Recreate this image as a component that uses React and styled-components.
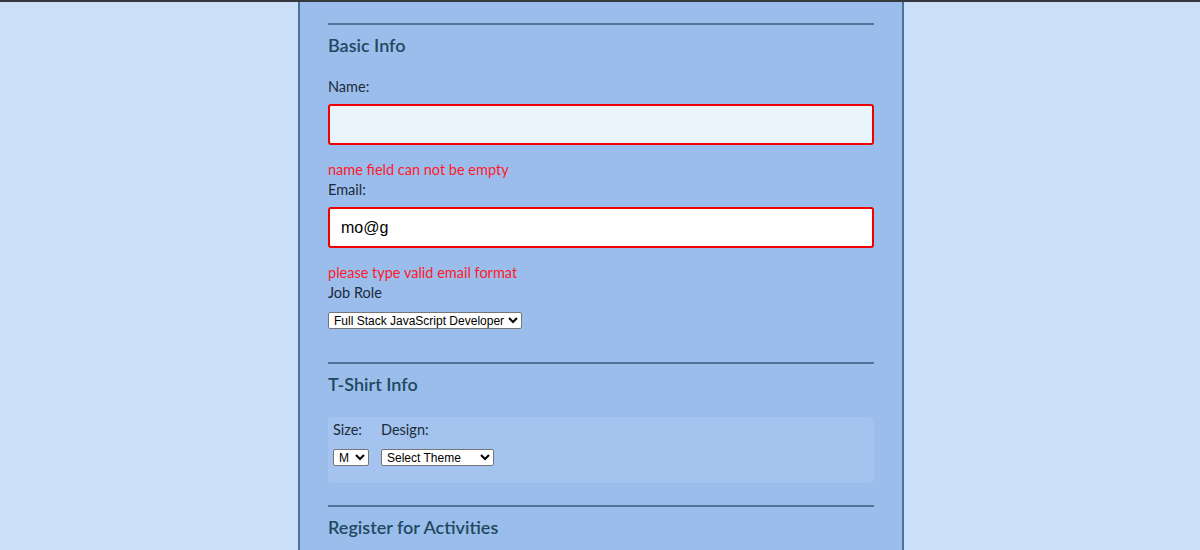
import React, { useState } from 'react';
import styled, { createGlobalStyle } from 'styled-components';

const GlobalStyle = createGlobalStyle`
  html, body {
    margin: 0;
    padding: 0;
    background: #cbdff9;
  }
  body {
    border-top: 2px solid #35393d;
    font-family: "Lato", "Open Sans", sans-serif;
  }
`;

const jobRoles = ['Full Stack JavaScript Developer', 'Front End Developer', 'Back End Developer', 'Designer', 'Other'];
const sizes = ['S', 'M', 'L', 'XL'];
const themes = ['Select Theme', 'Theme - JS Puns', 'Theme - I ♥ JS'];

const App = () => {
  const [name, setName] = useState('');
  const [email, setEmail] = useState('mo@g');

  return (
    <>
      <GlobalStyle />
      <Page>
        <Container>
          <Section>
            <Heading>Basic Info</Heading>
            <Label htmlFor="name">Name:</Label>
            <TextInput id="name" $invalid $tint value={name} onChange={e => setName(e.target.value)} />
            <ErrorText>name field can not be empty</ErrorText>
            <Label htmlFor="mail">Email:</Label>
            <TextInput id="mail" $invalid value={email} onChange={e => setEmail(e.target.value)} autoFocus />
            <ErrorText>please type valid email format</ErrorText>
            <Label htmlFor="title">Job Role</Label>
            <SelectBox id="title" defaultValue={jobRoles[0]}>
              {jobRoles.map(r => <option key={r}>{r}</option>)}
            </SelectBox>
          </Section>

          <Section>
            <Heading>T-Shirt Info</Heading>
            <ShirtBox>
              <ShirtColumn>
                <SmallLabel>Size:</SmallLabel>
                <SelectBox $width={36} defaultValue="M">
                  {sizes.map(s => <option key={s}>{s}</option>)}
                </SelectBox>
              </ShirtColumn>
              <ShirtColumn>
                <SmallLabel>Design:</SmallLabel>
                <SelectBox $width={113} defaultValue={themes[0]}>
                  {themes.map(t => <option key={t}>{t}</option>)}
                </SelectBox>
              </ShirtColumn>
            </ShirtBox>
          </Section>

          <Section>
            <Heading>Register for Activities</Heading>
          </Section>
        </Container>
      </Page>
    </>
  );
};

const Page = styled.div`
  display: flex;
  justify-content: center;
  padding-left: 2px;
  height: 548px;
  overflow: hidden;
`;

const Container = styled.div`
  width: 546px;
  padding: 21px 28px 0 28px;
  background: #9bbdec;
  border-left: 2px solid #4a7398;
  border-right: 2px solid #4a7398;
`;

const Section = styled.div`
  display: flex;
  flex-direction: column;
  align-items: flex-start;
  border-top: 2px solid #4b7696;
  padding-bottom: 33px;
`;

const Heading = styled.h2`
  margin: 8px 0 20px 0;
  font-size: 18px;
  line-height: 24px;
  font-weight: 600;
  color: #1e4a5f;
`;

const Label = styled.label`
  font-size: 14.5px;
  line-height: 20px;
  color: #1c2b3a;
`;

const SmallLabel = styled(Label)`
  margin-bottom: 9px;
`;

const TextInput = styled.input`
  box-sizing: border-box;
  width: 100%;
  height: 41px;
  margin-top: 7px;
  padding: 0 11px;
  border: 2px solid ${p => (p.$invalid ? '#f00000' : '#4b7696')};
  border-radius: 3px;
  background: ${p => (p.$tint ? '#e9f5fb' : '#ffffff')};
  font-family: "Liberation Sans", Arial, sans-serif;
  font-size: 16px;
  color: #000;
  outline: none;
`;

const ErrorText = styled.p`
  margin: 15px 0 0 0;
  font-size: 14.5px;
  line-height: 20px;
  color: #ff1a2a;
`;

const SelectBox = styled.select`
  box-sizing: border-box;
  width: ${p => (p.$width ? `${p.$width}px` : 'auto')};
  height: 17px;
  margin-top: 9px;
  padding: 0 0 0 1px;
  font-family: "Liberation Sans", Arial, sans-serif;
  font-size: 12px;
  color: #000;
  background: #fff;
  border: 1px solid #767676;
  border-radius: 2px;
`;

const ShirtBox = styled.div`
  align-self: stretch;
  display: flex;
  gap: 12px;
  margin-top: 1px;
  margin-bottom: -11px;
  padding: 3px 5px 17px 5px;
  background: #a4c4ef;
  border-radius: 4px;

  ${SelectBox} {
    margin-top: 0;
  }
`;

const ShirtColumn = styled.div`
  display: flex;
  flex-direction: column;
  align-items: flex-start;
`;

export default App;
